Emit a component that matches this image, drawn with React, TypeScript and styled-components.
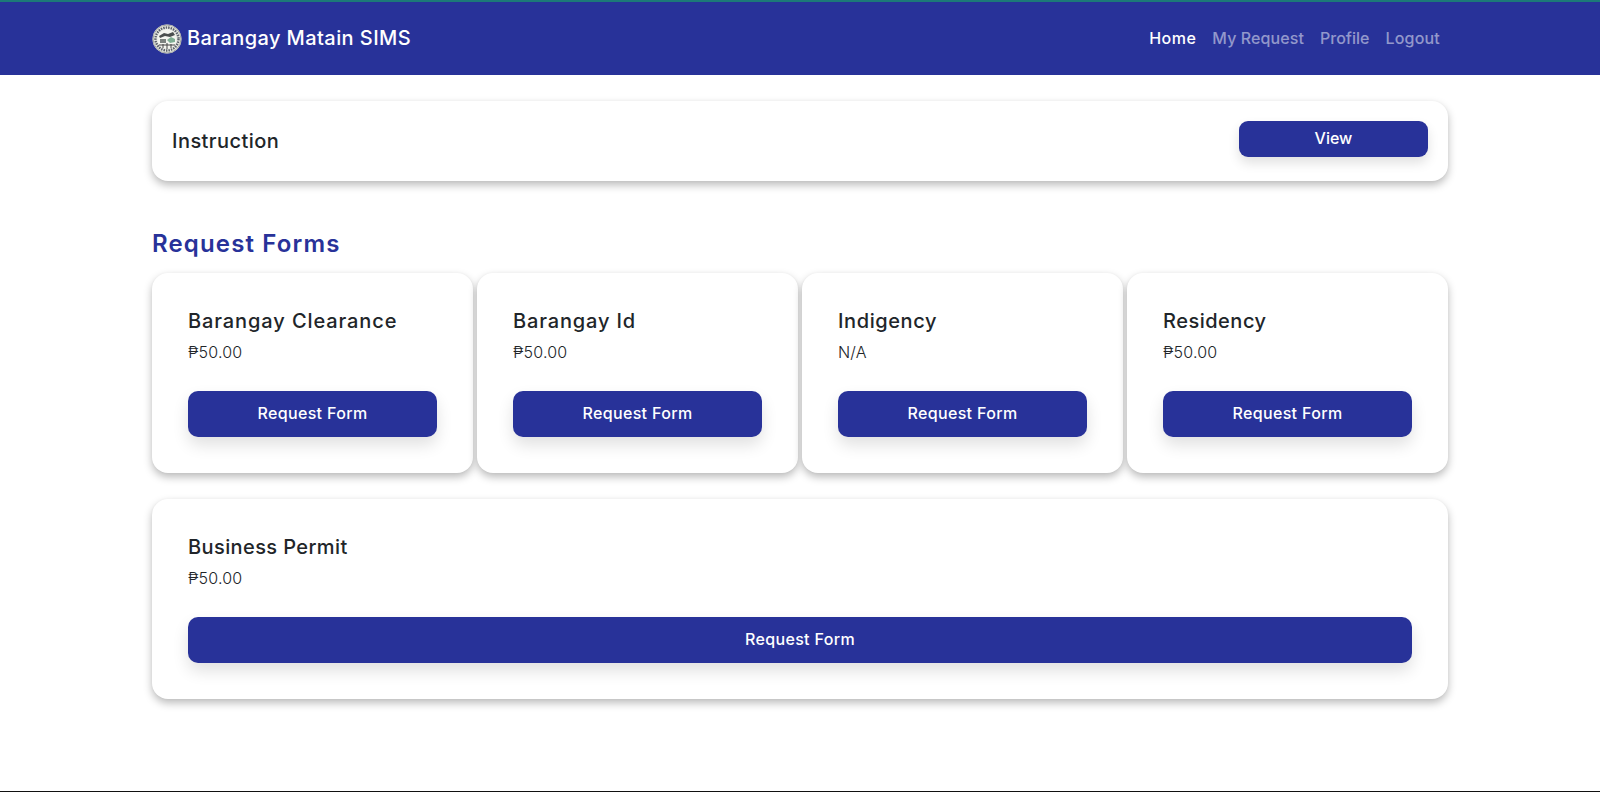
import React from "react";
import styled, { createGlobalStyle } from "styled-components";

const navy = "#283299";

const GlobalStyle = createGlobalStyle`
  html, body {
    margin: 0;
    padding: 0;
    background: #fff;
  }
  body {
    font-family: Inter, "Noto Sans", "DejaVu Sans", sans-serif;
    color: #212529;
  }
`;

const Page = styled.div`
  height: 792px;
  box-sizing: border-box;
  border-bottom: 1px solid #111;
  overflow: hidden;
`;

const Navbar = styled.header`
  height: 75px;
  box-sizing: border-box;
  background: ${navy};
  border-top: 2px solid #1c7a78;
  padding-bottom: 2px;
  display: flex;
  align-items: center;
`;

const Container = styled.div`
  width: 1296px;
  margin: 0 auto;
`;

const NavInner = styled(Container)`
  display: flex;
  align-items: center;
  justify-content: space-between;
`;

const Brand = styled.a`
  display: flex;
  align-items: center;
  gap: 5px;
  color: #fff;
  font-size: 20px;
  font-weight: 450;
  letter-spacing: 0.42px;
`;

const BrandSeal = styled.svg`
  margin-top: 2px;
`;

const NavLinks = styled.nav`
  display: flex;
  gap: 16px;
  padding-right: 8px;
`;

const NavLink = styled.a<{ $active?: boolean; $tracking: number }>`
  font-size: 16px;
  font-weight: 450;
  letter-spacing: ${(p) => p.$tracking}px;
  color: ${(p) => (p.$active ? "#fff" : "rgba(255, 255, 255, 0.5)")};
`;

const Card = styled.section`
  background: #fff;
  border-radius: 16px;
  box-shadow: 0 4px 8px rgba(0, 0, 0, 0.27), 0 0 3px rgba(0, 0, 0, 0.03);
`;

const InstructionCard = styled(Card)`
  margin-top: 26px;
  height: 80px;
  box-sizing: border-box;
  padding: 20px;
  display: flex;
  align-items: flex-start;
  justify-content: space-between;
`;

const InstructionTitle = styled.h5`
  margin: 0;
  font-size: 20px;
  font-weight: 450;
  line-height: 40px;
  letter-spacing: 0.45px;
`;

const ViewButton = styled.button`
  width: 189px;
  height: 36px;
  padding: 0 0 2px;
  border: 0;
  border-radius: 9px;
  background: ${navy};
  color: #fff;
  font: inherit;
  font-size: 16px;
  font-weight: 450;
  box-shadow: 0 6px 12px rgba(0, 0, 0, 0.12);
`;

const SectionTitle = styled.h4`
  margin: 47px 0 13px;
  font-size: 24px;
  line-height: 32px;
  font-weight: 600;
  letter-spacing: 1.15px;
  color: ${navy};
`;

const CardGrid = styled.div`
  display: grid;
  grid-template-columns: repeat(4, 1fr);
  gap: 4px;
`;

const FormCard = styled(Card)<{ $wide?: boolean }>`
  height: 200px;
  box-sizing: border-box;
  padding: 36px;
  ${(p) => (p.$wide ? "margin-top: 26px;" : "")}
`;

const FormTitle = styled.h5<{ $tracking: number }>`
  margin: 0;
  font-size: 20px;
  font-weight: 450;
  line-height: 24px;
  letter-spacing: ${(p) => p.$tracking}px;
`;

const Price = styled.p`
  margin: 7px 0 0;
  font-size: 16px;
  font-weight: 350;
  line-height: 24px;
  letter-spacing: 0.2px;
`;

const RequestButton = styled.button`
  display: block;
  width: 100%;
  height: 46px;
  padding: 0 0 2px;
  margin-top: 27px;
  border: 0;
  border-radius: 10px;
  background: ${navy};
  color: #fff;
  font: inherit;
  font-size: 16px;
  font-weight: 450;
  letter-spacing: 0.35px;
  box-shadow: 0 8px 16px rgba(0, 0, 0, 0.12);
`;

const Seal = () => (
  <BrandSeal width="30" height="30" viewBox="0 0 30 30" aria-hidden="true">
    <circle cx="15" cy="15" r="14.5" fill="#e9ebe4" />
    <circle cx="15" cy="15" r="14" fill="none" stroke="#a4a7a0" strokeWidth="1" />
    <circle cx="15" cy="15" r="11.5" fill="none" stroke="#5b606a" strokeWidth="2.4" strokeDasharray="1.5 1" />
    <circle cx="15" cy="15" r="9.4" fill="#f4f5f0" />
    <path d="M7 12l5-3 4 1 5-2 2 3-5 2-5-1-5 2z" fill="#4a4e4e" />
    <path d="M15 16l4-3 4 2 0 3-5 1z" fill="#7fae93" />
    <path d="M8 15h6v4H8z" fill="#7c827f" />
    <path d="M7 21h16M15 19v6M11 20v4M19 20v4" stroke="#444" strokeWidth="1" />
  </BrandSeal>
);

const links = [
  { label: "Home", tracking: 0.5, active: true },
  { label: "My Request", tracking: 0.1 },
  { label: "Profile", tracking: 0 },
  { label: "Logout", tracking: 0.2 },
];

const forms = [
  { name: "Barangay Clearance", price: "₱50.00", tracking: 0.9 },
  { name: "Barangay Id", price: "₱50.00", tracking: 0.85 },
  { name: "Indigency", price: "N/A", tracking: 0.6 },
  { name: "Residency", price: "₱50.00", tracking: 0.5 },
];

type FormBlockProps = { name: string; price: string; tracking: number; wide?: boolean };

const FormBlock = ({ name, price, tracking, wide }: FormBlockProps) => (
  <FormCard $wide={wide}>
    <FormTitle $tracking={tracking}>{name}</FormTitle>
    <Price>{price}</Price>
    <RequestButton>Request Form</RequestButton>
  </FormCard>
);

const App = () => {
  return (
    <Page>
      <GlobalStyle />
      <Navbar>
        <NavInner>
          <Brand>
            <Seal />
            Barangay Matain SIMS
          </Brand>
          <NavLinks>
            {links.map((l) => (
              <NavLink key={l.label} $active={l.active} $tracking={l.tracking}>
                {l.label}
              </NavLink>
            ))}
          </NavLinks>
        </NavInner>
      </Navbar>
      <Container>
        <InstructionCard>
          <InstructionTitle>Instruction</InstructionTitle>
          <ViewButton>View</ViewButton>
        </InstructionCard>
        <SectionTitle>Request Forms</SectionTitle>
        <CardGrid>
          {forms.map((f) => (
            <FormBlock key={f.name} name={f.name} price={f.price} tracking={f.tracking} />
          ))}
        </CardGrid>
        <FormBlock name="Business Permit" price="₱50.00" tracking={0.4} wide />
      </Container>
    </Page>
  );
};

export default App;
